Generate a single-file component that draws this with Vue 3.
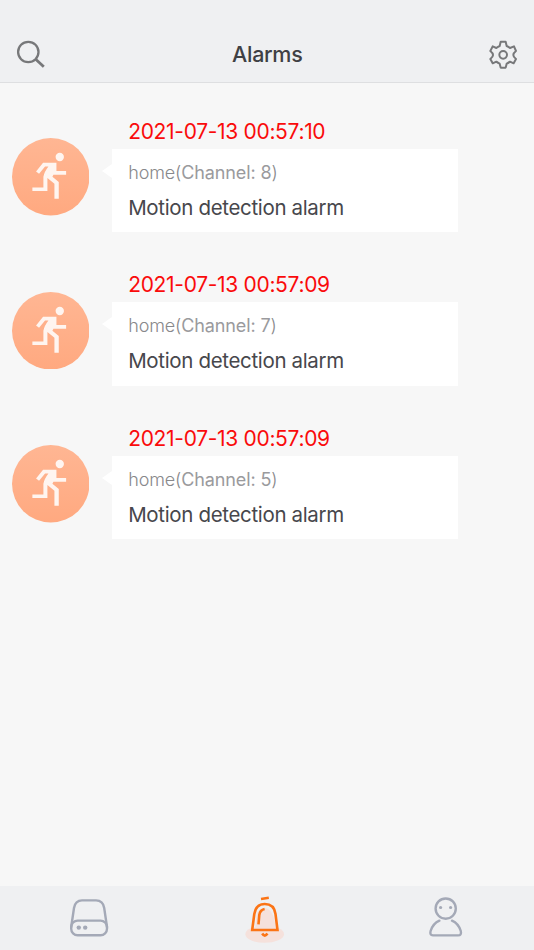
<script setup>
const alarms = [
  { id: 1, time: '2021-07-13 00:57:10', device: 'home', channel: 8, text: 'Motion detection alarm' },
  { id: 2, time: '2021-07-13 00:57:09', device: 'home', channel: 7, text: 'Motion detection alarm' },
  { id: 3, time: '2021-07-13 00:57:09', device: 'home', channel: 5, text: 'Motion detection alarm' },
]
</script>

<template>
  <div class="screen">
    <header class="header">
      <svg class="search" viewBox="0 0 30 30" width="30" height="30">
        <circle cx="12.3" cy="12" r="10.2" />
        <path d="M19.7 19.3 L27.8 26.8" class="handle" />
      </svg>
      <h1 class="title">Alarms</h1>
      <svg class="gear" viewBox="0 0 84 88" width="28" height="29.3">
        <path d="M35 5 H50 L53 18 Q58 20 63 24 L75 19 L81 33 Q73 39 73 45 Q73 51 81 57 L74 70 L63 65 Q58 69 53 71 L50 83 H35 L32 71 Q27 69 22 65 L11 70 L4 57 Q12 51 12 45 Q12 39 4 33 L11 19 L22 24 Q27 20 32 18 Z" />
        <circle cx="42.5" cy="44.5" r="11.5" />
      </svg>
    </header>

    <main class="list">
      <article v-for="a in alarms" :key="a.id" class="alarm">
        <svg class="avatar" viewBox="0 0 232 232" width="77.5" height="77.5">
          <defs>
            <linearGradient :id="'peach' + a.id" x1="0" y1="0" x2="0" y2="1">
              <stop offset="0" stop-color="#ffb693" />
              <stop offset="1" stop-color="#ffa980" />
            </linearGradient>
          </defs>
          <circle cx="116" cy="116" r="116" :fill="`url(#peach${a.id})`" />
          <g class="runner">
            <circle cx="143" cy="57" r="12.5" />
            <path d="M72 100 L93 74 H133 V99 H162 V110 H124 L121 116 L140 132 V182 H127 V137 L106 120 V159 H61 V148 H94 V116 Q96 102 109 85 H99 L81 107 Z" />
          </g>
        </svg>
        <div class="body">
          <time class="time">{{ a.time }}</time>
          <div class="card">
            <p class="source"><span class="device">{{ a.device }}(</span><span class="channel">Channel: {{ a.channel }}</span><span class="close">)</span></p>
            <p class="message">{{ a.text }}</p>
          </div>
        </div>
      </article>
    </main>

    <nav class="tabs">
      <a class="tab">
        <svg class="line" viewBox="0 0 178 64" width="178" height="64">
          <rect x="71.2" y="34.6" width="35.8" height="14.6" rx="6.5" />
          <path d="M71.2 41 L74 22 Q75.3 14.4 82 14.4 H96 Q103 14.4 104.2 22 L107 41" />
          <circle class="dot" cx="78.8" cy="41.6" r="2.2" />
          <circle class="dot" cx="85.2" cy="41.6" r="2.2" />
        </svg>
      </a>
      <a class="tab">
        <svg class="bell" viewBox="178 0 178 64" width="178" height="64">
          <ellipse class="glow" cx="264.7" cy="48.2" rx="19.3" ry="8.6" />
          <path class="fill" d="M255 43 L257 27 Q262 20 268 23 Q274 26 276 43 Z" />
          <path d="M252.2 44 L254.3 28 C255.5 20.5 259.5 18 264.7 18 C270 18 274.5 20.5 275.5 28 L277.5 44 Z" />
          <path d="M258.5 38.3 L259.3 29 Q260 24 264.6 23" />
          <path d="M261 13 L268.8 11.8" />
          <path d="M262.2 47.5 Q264.8 51.7 267.4 47.5" />
        </svg>
      </a>
      <a class="tab">
        <svg class="line" viewBox="356 0 178 64" width="178" height="64">
          <circle cx="445.7" cy="22.6" r="10.1" />
          <circle class="dot" cx="440.6" cy="21.5" r="1.6" />
          <circle class="dot" cx="450.6" cy="21.5" r="1.6" />
          <path d="M439.4 34.7 Q433 37.5 430.6 45 Q429.5 49.4 433 49.4 H458 Q461.8 49.4 460.8 45 Q458.4 37.5 452 34.7" />
        </svg>
      </a>
    </nav>
  </div>
</template>

<style>
body {
  margin: 0;
}
</style>

<style scoped>
.screen {
  box-sizing: border-box;
  display: flex;
  flex-direction: column;
  width: 534px;
  height: 950px;
  overflow: hidden;
  background: #f7f7f7;
  font-family: Inter, "Liberation Sans", sans-serif;
}
.header {
  box-sizing: border-box;
  flex: none;
  display: flex;
  align-items: center;
  justify-content: space-between;
  height: 83px;
  padding: 27px 17.5px 0 16px;
  border-bottom: 1px solid #dedfe1;
  background: #eff0f2;
}
.header svg {
  fill: none;
  stroke: #77787a;
  stroke-linejoin: round;
}
.search {
  stroke-width: 2.3;
}
.handle {
  stroke-width: 2.8;
}
.gear {
  stroke-width: 6;
}
.title {
  margin: 0;
  padding-bottom: 2px;
  color: #3f4044;
  font-size: 21.5px;
  font-weight: 500;
  line-height: 28px;
  letter-spacing: -0.3px;
}
.list {
  flex: 1;
  padding: 34.7px 0 0 11.7px;
}
.alarm {
  display: flex;
  height: 153.5px;
}
.avatar {
  flex: none;
  margin: 20.5px 23px 0 0;
}
.runner {
  fill: #fff5f0;
}
.body {
  width: 345.5px;
}
.time {
  display: block;
  height: 31px;
  padding-left: 16px;
  color: #fa0b0b;
  font-size: 21px;
  line-height: 27px;
  letter-spacing: -0.32px;
  white-space: nowrap;
}
.card {
  position: relative;
  box-sizing: border-box;
  height: 83.5px;
  padding: 11px 16px 0;
  background: #fff;
}
.card::before {
  content: "";
  position: absolute;
  left: -10px;
  top: 15px;
  border: 7px solid transparent;
  border-right: 10px solid #fff;
  border-left: 0;
}
.source,
.message {
  margin: 0;
  white-space: nowrap;
}
.source {
  display: flex;
  height: 35px;
  color: #9a9a9d;
  font-size: 18px;
  line-height: 25px;
  letter-spacing: -0.12px;
}
.device,
.close {
  color: #88888b;
  font-weight: 300;
}
.message {
  color: #47474c;
  font-size: 20.5px;
  line-height: 26px;
  letter-spacing: -0.34px;
}
.tabs {
  flex: none;
  display: flex;
  height: 64px;
  background: #eff0f2;
}
.tab {
  display: flex;
  width: 178px;
}
.line {
  fill: none;
  stroke: #a4a9b7;
  stroke-width: 2.4;
  stroke-linecap: round;
}
.dot {
  fill: #a4a9b7;
  stroke: none;
}
.bell {
  fill: none;
  stroke: #fb7416;
  stroke-width: 2.6;
}
.glow,
.fill {
  fill: #f5e1dc;
  stroke: none;
}
</style>
